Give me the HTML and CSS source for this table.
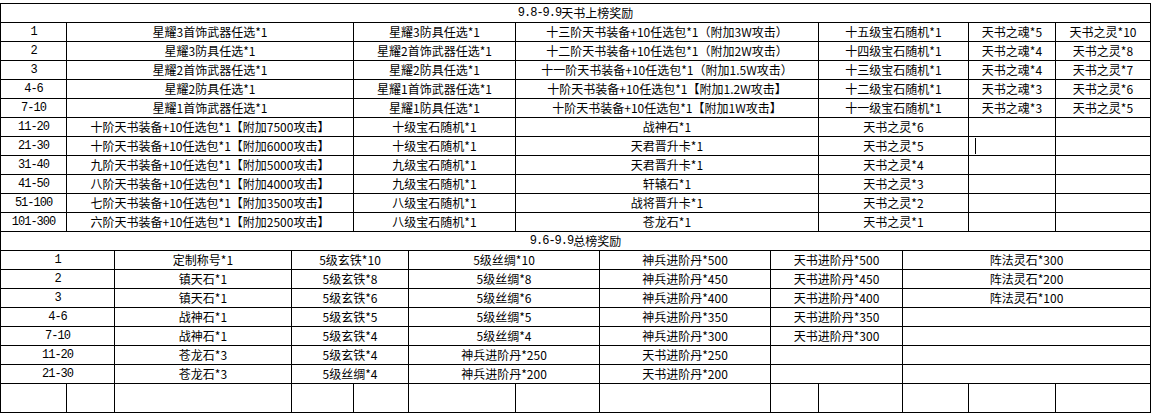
FILE: index.html
```html
<!DOCTYPE html>
<html lang="zh-CN">
<head>
<meta charset="utf-8">
<title>奖励表</title>
<link rel="stylesheet" href="styles.css">
</head>
<body>
<div class="sheet">
  <div class="c title"><span class="num">9.8-9.9</span>天书上榜奖励</div>

  <div class="c s1 num">1</div><div class="c s3">星耀3首饰武器任选*1</div><div class="c s2">星耀3防具任选*1</div><div class="c s3">十三阶天书装备+10任选包*1（附加3W攻击）</div><div class="c s2">十五级宝石随机*1</div><div class="c s1">天书之魂*5</div><div class="c s1">天书之灵*10</div>
  <div class="c s1 num">2</div><div class="c s3">星耀3防具任选*1</div><div class="c s2">星耀2首饰武器任选*1</div><div class="c s3">十二阶天书装备+10任选包*1（附加2W攻击）</div><div class="c s2">十四级宝石随机*1</div><div class="c s1">天书之魂*4</div><div class="c s1">天书之灵*8</div>
  <div class="c s1 num">3</div><div class="c s3">星耀2首饰武器任选*1</div><div class="c s2">星耀2防具任选*1</div><div class="c s3">十一阶天书装备+10任选包*1（附加1.5W攻击）</div><div class="c s2">十三级宝石随机*1</div><div class="c s1">天书之魂*4</div><div class="c s1">天书之灵*7</div>
  <div class="c s1 num">4-6</div><div class="c s3">星耀2防具任选*1</div><div class="c s2">星耀1首饰武器任选*1</div><div class="c s3">十阶天书装备+10任选包*1【附加1.2W攻击】</div><div class="c s2">十二级宝石随机*1</div><div class="c s1">天书之魂*3</div><div class="c s1">天书之灵*6</div>
  <div class="c s1 num">7-10</div><div class="c s3">星耀1首饰武器任选*1</div><div class="c s2">星耀1防具任选*1</div><div class="c s3">十阶天书装备+10任选包*1【附加1W攻击】</div><div class="c s2">十一级宝石随机*1</div><div class="c s1">天书之魂*3</div><div class="c s1">天书之灵*5</div>

  <div class="c s1 num">11-20</div><div class="c s3">十阶天书装备+10任选包*1【附加7500攻击】</div><div class="c s2">十级宝石随机*1</div><div class="c s3">战神石*1</div><div class="c s2">天书之灵*6</div><div class="c s1"></div><div class="c s1"></div>
  <div class="c s1 num">21-30</div><div class="c s3">十阶天书装备+10任选包*1【附加6000攻击】</div><div class="c s2">十级宝石随机*1</div><div class="c s3">天君晋升卡*1</div><div class="c s2">天书之灵*5</div><div class="c s1 has-cursor"><span class="cursor"></span></div><div class="c s1"></div>
  <div class="c s1 num">31-40</div><div class="c s3">九阶天书装备+10任选包*1【附加5000攻击】</div><div class="c s2">九级宝石随机*1</div><div class="c s3">天君晋升卡*1</div><div class="c s2">天书之灵*4</div><div class="c s1"></div><div class="c s1"></div>
  <div class="c s1 num">41-50</div><div class="c s3">八阶天书装备+10任选包*1【附加4000攻击】</div><div class="c s2">九级宝石随机*1</div><div class="c s3">轩辕石*1</div><div class="c s2">天书之灵*3</div><div class="c s1"></div><div class="c s1"></div>
  <div class="c s1 num">51-100</div><div class="c s3">七阶天书装备+10任选包*1【附加3500攻击】</div><div class="c s2">八级宝石随机*1</div><div class="c s3">战将晋升卡*1</div><div class="c s2">天书之灵*2</div><div class="c s1"></div><div class="c s1"></div>
  <div class="c s1 num">101-300</div><div class="c s3">六阶天书装备+10任选包*1【附加2500攻击】</div><div class="c s2">八级宝石随机*1</div><div class="c s3">苍龙石*1</div><div class="c s2">天书之灵*1</div><div class="c s1"></div><div class="c s1"></div>

  <div class="c title"><span class="num">9.6-9.9</span>总榜奖励</div>

  <div class="c s2 num">1</div><div class="c s1">定制称号*1</div><div class="c s2">5级玄铁*10</div><div class="c s2">5级丝绸*10</div><div class="c s1">神兵进阶丹*500</div><div class="c s2">天书进阶丹*500</div><div class="c s3">阵法灵石*300</div>
  <div class="c s2 num">2</div><div class="c s1">镇天石*1</div><div class="c s2">5级玄铁*8</div><div class="c s2">5级丝绸*8</div><div class="c s1">神兵进阶丹*450</div><div class="c s2">天书进阶丹*450</div><div class="c s3">阵法灵石*200</div>
  <div class="c s2 num">3</div><div class="c s1">镇天石*1</div><div class="c s2">5级玄铁*6</div><div class="c s2">5级丝绸*6</div><div class="c s1">神兵进阶丹*400</div><div class="c s2">天书进阶丹*400</div><div class="c s3">阵法灵石*100</div>
  <div class="c s2 num">4-6</div><div class="c s1">战神石*1</div><div class="c s2">5级玄铁*5</div><div class="c s2">5级丝绸*5</div><div class="c s1">神兵进阶丹*350</div><div class="c s2">天书进阶丹*350</div><div class="c s3"></div>
  <div class="c s2 num">7-10</div><div class="c s1">战神石*1</div><div class="c s2">5级玄铁*4</div><div class="c s2">5级丝绸*4</div><div class="c s1">神兵进阶丹*300</div><div class="c s2">天书进阶丹*300</div><div class="c s3"></div>
  <div class="c s2 num">11-20</div><div class="c s1">苍龙石*3</div><div class="c s2">5级玄铁*4</div><div class="c s2">神兵进阶丹*250</div><div class="c s1">天书进阶丹*250</div><div class="c s2"></div><div class="c s3"></div>
  <div class="c s2 num">21-30</div><div class="c s1">苍龙石*3</div><div class="c s2">5级丝绸*4</div><div class="c s2">神兵进阶丹*200</div><div class="c s1">天书进阶丹*200</div><div class="c s2"></div><div class="c s3"></div>

  <div class="c s1"></div><div class="c s1"></div><div class="c s1"></div><div class="c s1"></div><div class="c s1"></div><div class="c s1"></div><div class="c s1"></div><div class="c s1"></div><div class="c s1"></div><div class="c s1"></div><div class="c s1"></div><div class="c s1"></div><div class="c s1"></div>
</div>
</body>
</html>
```

FILE: styles.css
```css
html, body {
  margin: 0;
  padding: 0;
  background: #fff;
}

body {
  padding-top: 3px;
  font-family: "Noto Sans CJK SC", "Noto Sans", sans-serif;
  font-size: 12px;
  color: #000;
}

.sheet {
  display: grid;
  grid-template-columns: 65px 47px 176px 61px 54px 106px 83px 170px 47px 83px 65px 86px 94px;
  grid-template-rows: repeat(20, 18px) 28px;
  gap: 1px;
  padding: 1px;
  background: #000;
  width: max-content;
}

.c {
  background: #fff;
  display: flex;
  align-items: center;
  justify-content: center;
  white-space: nowrap;
  overflow: hidden;
  line-height: 18px;
}

.num {
  font-family: "Liberation Mono", monospace;
  font-size: 12px;
  letter-spacing: -1px;
}

.title { grid-column: 1 / -1; }
.s1 { grid-column: span 1; }
.s2 { grid-column: span 2; }
.s3 { grid-column: span 3; }

.has-cursor {
  position: relative;
}

.cursor {
  position: absolute;
  left: 6px;
  top: 1px;
  width: 1px;
  height: 16px;
  background: #000;
}
```
